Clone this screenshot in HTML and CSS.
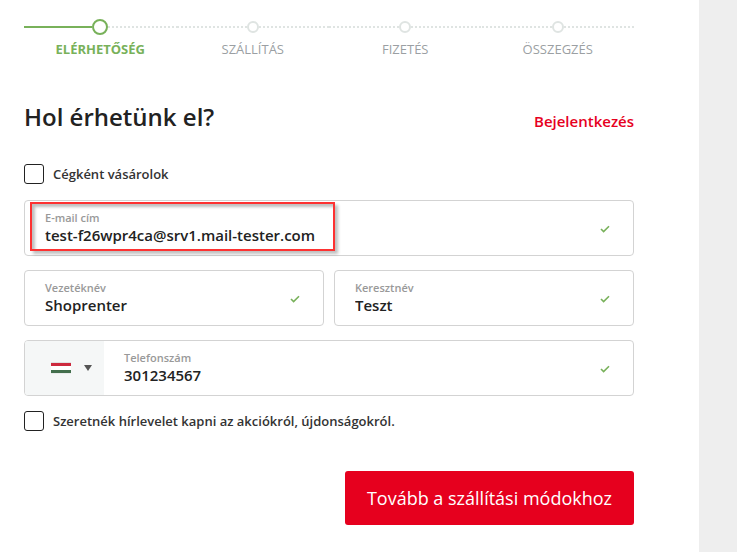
FILE: index.html
```html
<!DOCTYPE html>
<html lang="hu">
<head>
    <meta charset="UTF-8">
    <title>Pénztár</title>
    <meta name="viewport" content="width=device-width, initial-scale=1">
    <link rel="stylesheet" href="styles.css">
</head>
<body>
    <main class="checkout">
        <ol class="steps">
            <li class="step active" aria-current="step">
                <div class="track"><span class="dot"></span></div>
                ELÉRHETŐSÉG
            </li>
            <li class="step">
                <div class="track"><span class="dot"></span></div>
                SZÁLLÍTÁS
            </li>
            <li class="step">
                <div class="track"><span class="dot"></span></div>
                FIZETÉS
            </li>
            <li class="step">
                <div class="track"><span class="dot"></span></div>
                ÖSSZEGZÉS
            </li>
        </ol>
        <header class="heading">
            <h1>Hol érhetünk el?</h1>
            <a href="#login">Bejelentkezés</a>
        </header>
        <form>
            <div class="check">
                <input id="company" type="checkbox" name="company">
                <label for="company">Cégként vásárolok</label>
            </div>
            <div class="fields">
                <div class="field wide">
                    <div class="text">
                        <label for="email">E-mail cím</label>
                        <input id="email" type="text" name="email" value="test-f26wpr4ca@srv1.mail-tester.com" spellcheck="false">
                    </div>
                    <svg class="ok" viewBox="0 0 10 8"><path d="M1 4l2.6 2.6L9 1.2"/></svg>
                    <span class="highlight"></span>
                </div>
                <div class="field">
                    <div class="text">
                        <label for="lastname">Vezetéknév</label>
                        <input id="lastname" type="text" name="lastname" value="Shoprenter" spellcheck="false">
                    </div>
                    <svg class="ok" viewBox="0 0 10 8"><path d="M1 4l2.6 2.6L9 1.2"/></svg>
                </div>
                <div class="field">
                    <div class="text">
                        <label for="firstname">Keresztnév</label>
                        <input id="firstname" type="text" name="firstname" value="Teszt" spellcheck="false">
                    </div>
                    <svg class="ok" viewBox="0 0 10 8"><path d="M1 4l2.6 2.6L9 1.2"/></svg>
                </div>
                <div class="field wide">
                    <div class="country">
                        <svg class="flag" viewBox="0 0 20 12">
                            <rect width="20" height="12" fill="#fff"/>
                            <rect width="20" height="1" fill="#e0e2e2"/>
                            <rect y="1" width="20" height="3" fill="#cd2a3e"/>
                            <rect y="8" width="20" height="3" fill="#436f4d"/>
                            <rect y="11" width="20" height="1" fill="#e9ebeb"/>
                        </svg>
                        <svg class="caret" viewBox="0 0 8 6"><path d="M0 0h8L4 6z"/></svg>
                        <select name="country" aria-label="Ország">
                            <option>+36</option>
                        </select>
                    </div>
                    <div class="text">
                        <label for="phone">Telefonszám</label>
                        <input id="phone" type="tel" name="phone" value="301234567">
                    </div>
                    <svg class="ok" viewBox="0 0 10 8"><path d="M1 4l2.6 2.6L9 1.2"/></svg>
                </div>
            </div>
            <div class="check">
                <input id="newsletter" type="checkbox" name="newsletter">
                <label for="newsletter">Szeretnék hírlevelet kapni az akciókról, újdonságokról.</label>
            </div>
            <button class="next" type="submit">Tovább a szállítási módokhoz</button>
        </form>
    </main>
    <aside class="side"></aside>
</body>
</html>
```
FILE: styles.css
```css
* {
    box-sizing: border-box;
}
body {
    margin: 0;
    min-height: 100vh;
    display: grid;
    grid-template-columns: 1fr 38px;
    background: white;
    color: #222;
}
body, input, button {
    font-family: "Open Sans", sans-serif;
}
.checkout {
    padding: 19px 65px 24px 24px;
}
.side {
    background: #eee;
}

/* steps */
.steps {
    display: grid;
    grid-template-columns: repeat(4, 1fr);
    list-style: none;
    margin: 0;
    padding: 0;
}
.step {
    text-align: center;
    font-size: 13px;
    line-height: 18px;
    color: #9b9fa3;
}
.track {
    display: flex;
    align-items: center;
    height: 16px;
    margin-bottom: 5px;
}
.track::before, .track::after {
    content: "";
    flex: 1;
    height: 2px;
    background: repeating-linear-gradient(to right, #dfe4e2 0 2px, transparent 2px 4px);
}
.dot {
    width: 12px;
    height: 12px;
    border: 2px solid #dfe4e2;
    border-radius: 50%;
}
.active {
    color: #78b15a;
    font-weight: bold;
}
.active .dot {
    width: 16px;
    height: 16px;
    border-color: #78b15a;
}
.active .track::before {
    background: #78b15a;
}

.heading {
    display: flex;
    justify-content: space-between;
    align-items: flex-end;
    margin-top: 42px;
}
.heading h1 {
    margin: 0;
    font-size: 24px;
    line-height: 34px;
    font-weight: 600;
}
.heading a {
    color: #e6001e;
    font-size: 15px;
    line-height: 26px;
    font-weight: 600;
    text-decoration: none;
}

.check {
    display: flex;
    align-items: center;
    gap: 9px;
    font-size: 13px;
    line-height: 20px;
    font-weight: 600;
    color: #333;
}
.check input {
    appearance: none;
    flex: none;
    width: 20px;
    height: 20px;
    margin: 0;
    background: white;
    border: 1px solid #222;
    border-radius: 3px;
}
.check input:checked {
    background: #78b15a;
}
.heading + form {
    margin-top: 30px;
}

/* fields */
.fields {
    display: grid;
    grid-template-columns: 1fr 1fr;
    gap: 14px 10px;
    margin: 16px 0 15px;
}
.field {
    position: relative;
    display: flex;
    align-items: center;
    height: 56px;
    padding-right: 23px;
    background: white;
    border: 1px solid #d3d3d3;
    border-radius: 4px;
}
.wide {
    grid-column: span 2;
}
.text {
    flex: 1;
    min-width: 0;
    padding-left: 20px;
}
.text label {
    display: block;
    color: #999;
    font-size: 11px;
    line-height: 14px;
    font-weight: 600;
}
.text input {
    display: block;
    width: 100%;
    height: 20px;
    padding: 0;
    border: 0;
    outline: 0;
    background: transparent;
    color: #222;
    font-size: 15px;
    font-weight: 600;
}
.ok {
    width: 10px;
    height: 8px;
    margin-top: 2px;
    fill: none;
    stroke: #78b15a;
    stroke-width: 1.6;
}
.highlight {
    position: absolute;
    top: 1px;
    left: 5px;
    width: 305px;
    height: 49px;
    border: 2px solid #fd3232;
    box-shadow: 3px 3px 3px rgba(0, 0, 0, .25), inset 3px 3px 3px rgba(0, 0, 0, .25);
    pointer-events: none;
}
.country {
    position: relative;
    display: flex;
    align-items: center;
    gap: 13px;
    width: 79px;
    height: 100%;
    padding-left: 26px;
    background: #f5f7f7;
    border-radius: 3px 0 0 3px;
}
.flag {
    width: 20px;
    height: 12px;
}
.caret {
    width: 8px;
    height: 6px;
    fill: #555;
}
.country select {
    position: absolute;
    inset: 0;
    width: 100%;
    opacity: 0;
    cursor: pointer;
}

.next {
    display: block;
    margin: 40px 0 0 auto;
    padding: 15px 22px;
    border: 0;
    border-radius: 3px;
    background: #e6001e;
    color: white;
    font-size: 18px;
    line-height: 24px;
    cursor: pointer;
}
```
